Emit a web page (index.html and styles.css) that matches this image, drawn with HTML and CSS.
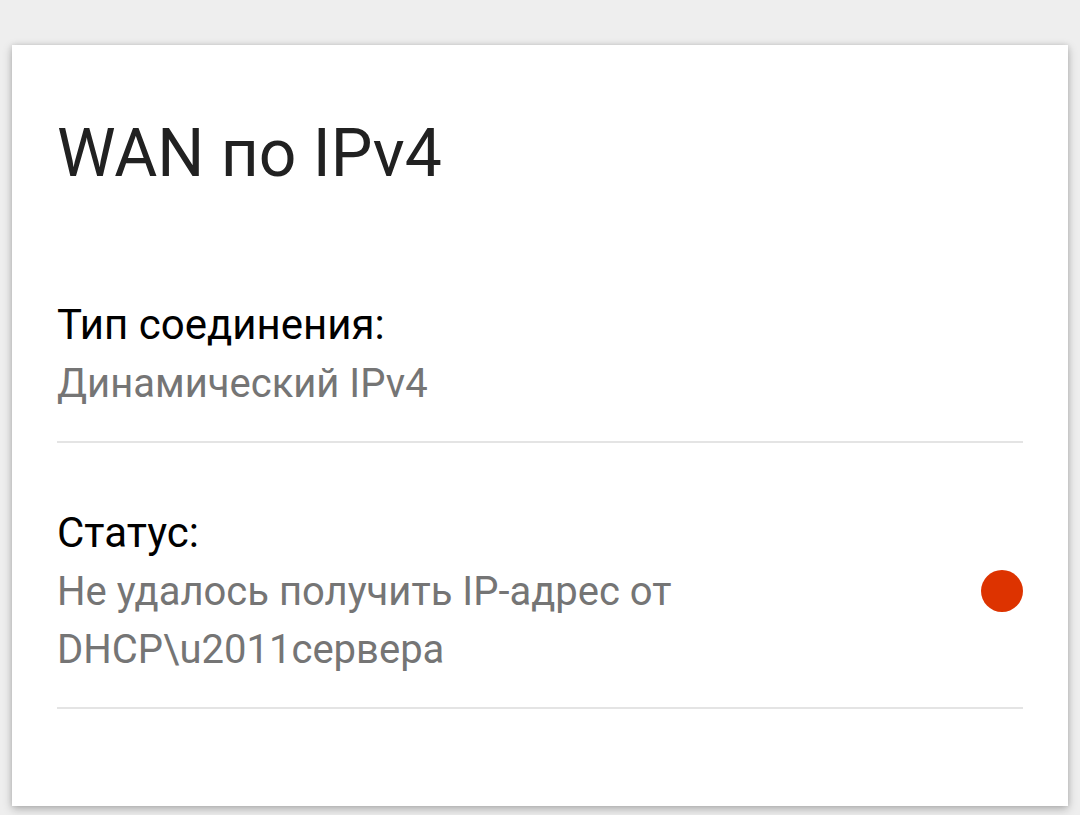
FILE: index.html
```html
<!DOCTYPE html>
<html lang="ru">
<head>
<meta charset="utf-8">
<title>WAN по IPv4</title>
<link rel="stylesheet" href="styles.css">
</head>
<body>
<main class="page">
  <section class="card">
    <h1 class="card-title">WAN по IPv4</h1>
    <div class="row">
      <div class="row-label">Тип соединения:</div>
      <div class="row-value">
        <span class="value-text">Динамический IPv4</span>
      </div>
    </div>
    <div class="row">
      <div class="row-label">Статус:</div>
      <div class="row-value">
        <span class="value-text">Не удалось получить IP-адрес от DHCP\u2011сервера</span>
        <span class="status-dot"></span>
      </div>
    </div>
  </section>
</main>
</body>
</html>
```

FILE: styles.css
```css
html, body {
  margin: 0;
  padding: 0;
  background: #eeeeee;
  font-family: Roboto, "Noto Sans", "Liberation Sans", sans-serif;
}

.page {
  padding: 45px 12px 9px;
}

.card {
  background: #ffffff;
  height: 761px;
  box-sizing: border-box;
  padding: 0 45px;
  box-shadow: 0 3px 9px rgba(0, 0, 0, 0.26), 0 0 5px rgba(0, 0, 0, 0.1);
}

.card-title {
  margin: 0;
  padding-top: 69px;
  font-size: 66px;
  line-height: 79px;
  font-weight: 400;
  color: #212121;
}

.row {
  padding: 60px 0 28px;
  border-bottom: 2px solid #e4e4e4;
}

.card-title + .row {
  margin-top: 42px;
}

.row-label {
  font-size: 42px;
  line-height: 60px;
  color: #000000;
}

.row-value {
  display: flex;
  align-items: flex-start;
  gap: 24px;
}

.value-text {
  flex: 1;
  font-size: 40px;
  line-height: 58px;
  color: #757575;
}

.status-dot {
  flex: none;
  width: 42px;
  height: 42px;
  margin-top: 7px;
  border-radius: 50%;
  background: #dd3300;
}
```
